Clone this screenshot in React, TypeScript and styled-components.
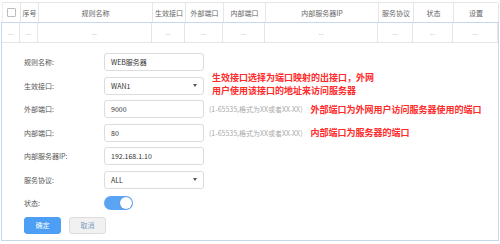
import React from 'react';
import styled, { createGlobalStyle } from 'styled-components';

const GlobalStyle = createGlobalStyle`
  html, body {
    margin: 0;
    padding: 0;
    background: #ffffff;
    font-family: "Noto Sans CJK SC", "Noto Sans", sans-serif;
  }
`;

const Page = styled.div`
  width: 500px;
  height: 244px;
  padding: 2px 2px 0 2px;
  box-sizing: border-box;
  overflow: hidden;
`;

const COLS = '18px 18px 114px 33px 38px 42px 113px 35px 40px 45px';

const HeaderRow = styled.div`
  display: grid;
  grid-template-columns: ${COLS};
  height: 20px;
  border-top: 1px solid #e6e6e6;
  border-left: 1px solid #eeeeee;
  box-sizing: border-box;
`;

const Cell = styled.div<{ $muted?: boolean }>`
  display: flex;
  align-items: center;
  justify-content: center;
  border-right: 1px solid #e6e6e6;
  font-size: 7px;
  color: ${(p) => (p.$muted ? '#b8b8b8' : '#666666')};
  white-space: nowrap;
  overflow: hidden;
`;

const CheckBox = styled.span`
  width: 7px;
  height: 7px;
  border: 1px solid #bcbcbc;
  border-radius: 1px;
  background: #fff;
`;

const EditBlock = styled.div`
  border: 1px solid #c5d8ee;
  height: 219px;
  box-sizing: border-box;
  margin-left: -1px;
  margin-right: -1px;
`;

const DataRow = styled.div`
  display: grid;
  grid-template-columns: ${COLS};
  height: 19px;
  border-bottom: 1px solid #e6e6e6;
`;

const Form = styled.div`
  display: flex;
  flex-direction: column;
  gap: 5.5px;
  padding: 10px 0 0 22px;
`;

const Row = styled.div`
  display: flex;
  align-items: center;
  height: 18px;
`;

const Label = styled.div`
  width: 80px;
  font-size: 7px;
  color: #555555;
`;

const Box = styled.div`
  width: 100px;
  height: 18px;
  box-sizing: border-box;
  border: 1px solid #dcdcdc;
  border-radius: 3px;
  background: #fff;
  display: flex;
  align-items: center;
  justify-content: space-between;
  padding: 0 6px 0 6px;
  font-size: 7px;
  color: #333333;
`;

const Arrow = styled.span`
  width: 0;
  height: 0;
  border-left: 2.5px solid transparent;
  border-right: 2.5px solid transparent;
  border-top: 3px solid #555;
`;

const Hint = styled.div`
  margin-left: 5px;
  font-size: 7px;
  color: #aaaaaa;
  white-space: nowrap;
`;

const Note = styled.div<{ $lift?: boolean }>`
  margin-left: 8px;
  font-size: 9px;
  line-height: 13px;
  font-weight: bold;
  color: #ff2a2a;
  white-space: nowrap;
  align-self: ${(p) => (p.$lift ? 'flex-start' : 'center')};
  margin-top: ${(p) => (p.$lift ? '-6px' : '0')};
`;

const Toggle = styled.div`
  width: 29px;
  height: 14px;
  border-radius: 7px;
  background: #5ba4f3;
  display: flex;
  align-items: center;
  justify-content: flex-end;
  padding: 0 1px;
  box-sizing: border-box;
`;

const Knob = styled.span`
  width: 12px;
  height: 12px;
  border-radius: 50%;
  background: #fff;
  box-shadow: 0 0 1px rgba(0, 0, 0, 0.25);
`;

const Buttons = styled.div`
  display: flex;
  gap: 8px;
  margin-top: -1px;
`;

const Button = styled.div<{ $primary?: boolean }>`
  width: 37px;
  height: 17px;
  box-sizing: border-box;
  border-radius: 3px;
  display: flex;
  align-items: center;
  justify-content: center;
  font-size: 7px;
  background: ${(p) => (p.$primary ? '#4c9ff5' : '#f1f1f1')};
  border: 1px solid ${(p) => (p.$primary ? '#4c9ff5' : '#dddddd')};
  color: ${(p) => (p.$primary ? '#ffffff' : '#7d9cc6')};
`;

const headers = ['', '序号', '规则名称', '生效接口', '外部端口', '内部端口', '内部服务器IP', '服务协议', '状态', '设置'];

const App: React.FC = () => {
  return (
    <Page>
      <GlobalStyle />
      <HeaderRow>
        {headers.map((h, i) => (
          <Cell key={i}>{i === 0 ? <CheckBox /> : h}</Cell>
        ))}
      </HeaderRow>
      <EditBlock>
        <DataRow>
          {headers.map((_, i) => (
            <Cell key={i} $muted>--</Cell>
          ))}
        </DataRow>
        <Form>
          <Row>
            <Label>规则名称:</Label>
            <Box>WEB服务器</Box>
          </Row>
          <Row>
            <Label>生效接口:</Label>
            <Box>WAN1<Arrow /></Box>
            <Note $lift>
              生效接口选择为端口映射的出接口，外网<br />
              用户使用该接口的地址来访问服务器
            </Note>
          </Row>
          <Row>
            <Label>外部端口:</Label>
            <Box>9000</Box>
            <Hint>(1-65535,格式为XX或者XX-XX)</Hint>
            <Note>外部端口为外网用户访问服务器使用的端口</Note>
          </Row>
          <Row>
            <Label>内部端口:</Label>
            <Box>80</Box>
            <Hint>(1-65535,格式为XX或者XX-XX)</Hint>
            <Note>内部端口为服务器的端口</Note>
          </Row>
          <Row>
            <Label>内部服务器IP:</Label>
            <Box>192.168.1.10</Box>
          </Row>
          <Row>
            <Label>服务协议:</Label>
            <Box>ALL<Arrow /></Box>
          </Row>
          <Row>
            <Label>状态:</Label>
            <Toggle><Knob /></Toggle>
          </Row>
          <Buttons>
            <Button $primary>确定</Button>
            <Button>取消</Button>
          </Buttons>
        </Form>
      </EditBlock>
    </Page>
  );
};

export default App;
